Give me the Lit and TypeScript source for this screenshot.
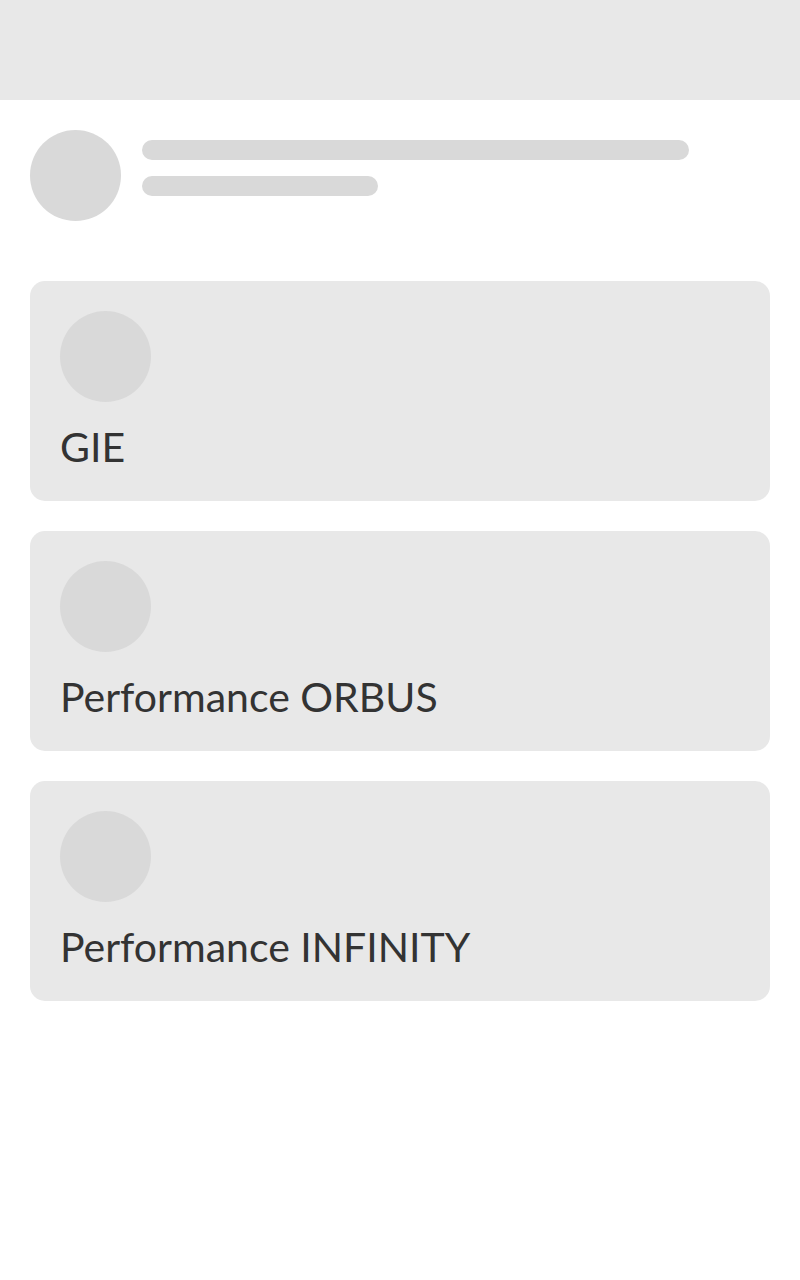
import { LitElement, html, css } from "lit";
import { customElement, property } from "lit/decorators.js";

@customElement("offer-card")
export class OfferCard extends LitElement {
  @property() label = "";

  static styles = css`
    :host {
      display: block;
    }
    .card {
      display: flex;
      flex-direction: column;
      gap: 21px;
      padding: 30px;
      border-radius: 15px;
      background: #e8e8e8;
    }
    .dot {
      width: 91px;
      height: 91px;
      border-radius: 50%;
      background: #d9d9d9;
    }
    .title {
      margin: 0;
      font-size: 41px;
      line-height: 48px;
      font-weight: 400;
      color: #333;
    }
  `;

  render() {
    return html`
      <article class="card">
        <div class="dot"></div>
        <h2 class="title">${this.label}</h2>
      </article>
    `;
  }
}

@customElement("app-root")
export class AppRoot extends LitElement {
  private offers = ["GIE", "Performance ORBUS", "Performance INFINITY"];

  static styles = css`
    :host {
      display: block;
      min-height: 100vh;
      background: #fff;
      font-family: Lato, "Liberation Sans", sans-serif;
    }
    .topbar {
      height: 100px;
      background: #e8e8e8;
    }
    .content {
      display: flex;
      flex-direction: column;
      gap: 60px;
      padding: 30px;
    }
    .profile {
      display: flex;
      gap: 21px;
    }
    .avatar {
      flex: none;
      width: 91px;
      height: 91px;
      border-radius: 50%;
      background: #d9d9d9;
    }
    .lines {
      flex: 1;
      display: flex;
      flex-direction: column;
      gap: 16px;
      padding-top: 10px;
    }
    .line {
      max-width: 100%;
      height: 20px;
      border-radius: 10px;
      background: #d9d9d9;
    }
    .long {
      width: 547px;
    }
    .short {
      width: 236px;
    }
    .list {
      display: flex;
      flex-direction: column;
      gap: 30px;
    }
  `;

  render() {
    return html`
      <header class="topbar"></header>
      <main class="content">
        <section class="profile">
          <div class="avatar"></div>
          <div class="lines">
            <div class="line long"></div>
            <div class="line short"></div>
          </div>
        </section>
        <section class="list">
          ${this.offers.map((label) => html`<offer-card .label=${label}></offer-card>`)}
        </section>
      </main>
    `;
  }
}
